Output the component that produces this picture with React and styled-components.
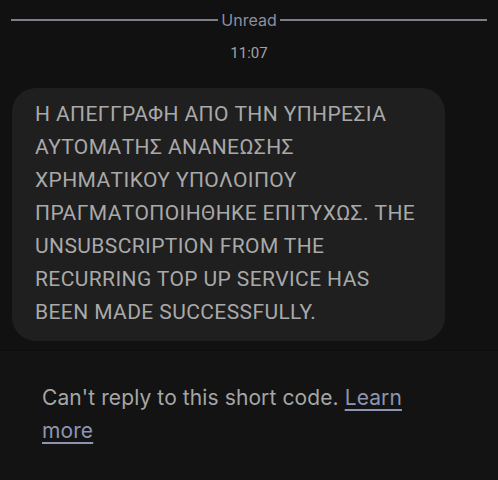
import React from "react";
import styled, { createGlobalStyle } from "styled-components";

const GlobalStyle = createGlobalStyle`
    html, body {
        margin: 0;
        padding: 0;
        background: #111111;
    }
    body {
        font-family: Roboto, "Noto Sans", "Liberation Sans", sans-serif;
        -webkit-font-smoothing: antialiased;
    }
`;

const Screen = styled.div`
    width: 498px;
    height: 480px;
    display: flex;
    flex-direction: column;
    background: #111111;
    overflow: hidden;
`;

const Thread = styled.div`
    display: flex;
    flex-direction: column;
    padding: 8px 0 0;
`;

const UnreadDivider = styled.div`
    display: flex;
    align-items: center;
    gap: 3px;
    padding: 0 11px;
    height: 24px;
    color: #8d8fa0;
    font-family: Inter, Roboto, sans-serif;
    font-size: 16px;

    &::before,
    &::after {
        content: "";
        flex: 1;
        height: 1.5px;
        background: #7c7e89;
    }
`;

const Timestamp = styled.div`
    margin-top: 11px;
    text-align: center;
    color: #a3a3a3;
    font-size: 15px;
    line-height: 20px;
`;

const Bubble = styled.div`
    margin: 25px 0 0 12px;
    width: 433px;
    box-sizing: border-box;
    padding: 10px 24px 12px 23px;
    border-radius: 24px;
    background: #1f1f1f;
    color: #a9a9a9;
    font-size: 21px;
    letter-spacing: 0.4px;
    line-height: 33px;
`;

const Composer = styled.div`
    margin-top: 9px;
    flex: 1;
    background: #131313;
    border-top: 1px solid #0d0d0d;
    padding: 30px 50px 0 42px;
    color: #a6a6a6;
    font-family: Inter, Roboto, sans-serif;
    font-size: 21px;
    letter-spacing: 0.1px;
    line-height: 33px;
`;

const LearnLink = styled.a`
    color: #8d95b1;
    text-decoration: underline;
    text-decoration-thickness: 2px;
    text-underline-offset: 4px;
`;

const App = () => {
    return (
        <Screen>
            <GlobalStyle />
            <Thread>
                <UnreadDivider>Unread</UnreadDivider>
                <Timestamp>11:07</Timestamp>
                <Bubble>
                    Η ΑΠΕΓΓΡΑΦΗ ΑΠΟ ΤΗΝ ΥΠΗΡΕΣΙΑ ΑΥΤΟΜΑΤΗΣ ΑΝΑΝΕΩΣΗΣ
                    ΧΡΗΜΑΤΙΚΟΥ ΥΠΟΛΟΙΠΟΥ ΠΡΑΓΜΑΤΟΠΟΙΗΘΗΚΕ ΕΠΙΤΥΧΩΣ. THE
                    UNSUBSCRIPTION FROM THE RECURRING TOP UP SERVICE HAS
                    BEEN MADE SUCCESSFULLY.
                </Bubble>
            </Thread>
            <Composer>
                Can't reply to this short code. <LearnLink href="#">Learn more</LearnLink>
            </Composer>
        </Screen>
    );
};

export default App;
